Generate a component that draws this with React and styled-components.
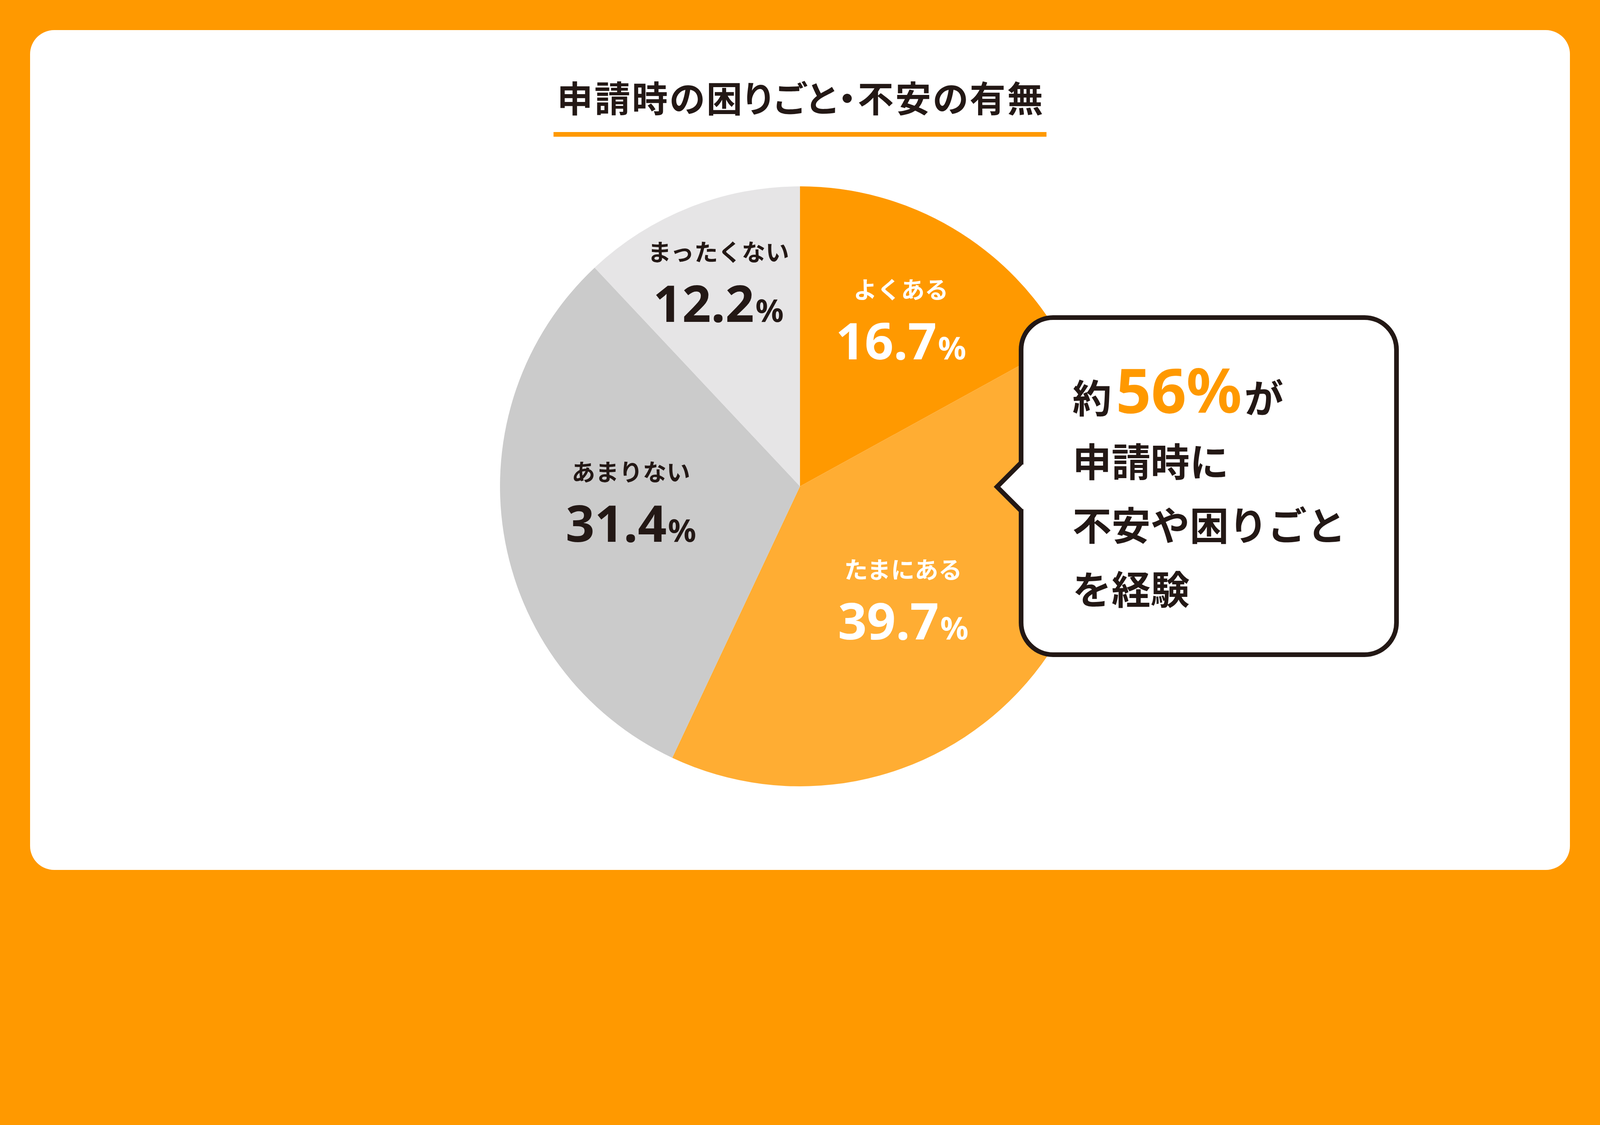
import React from "react";
import styled, { createGlobalStyle } from "styled-components";

const INK = "#231815";
const ORANGE = "#FF9900";
const JP = '"Noto Sans CJK JP", "Noto Sans", sans-serif';
const NUM = '"Noto Sans", "Noto Sans CJK JP", sans-serif';

// one reference pixel (of a 5120px-wide frame) expressed in viewport width
const v = (n) => `${+(n / 51.2).toFixed(5)}vw`;

const Global = createGlobalStyle`
  html, body { margin: 0; padding: 0; background: ${ORANGE}; overflow: hidden; }
  * { box-sizing: border-box; }
`;

const Page = styled.div`
  width: 100vw;
  height: ${v(2880)};
  padding: ${v(96)};
  background: ${ORANGE};
`;

const Card = styled.main`
  width: 100%;
  height: 100%;
  background: #ffffff;
  border-radius: ${v(77)};
  display: flex;
  flex-direction: column;
  align-items: center;
  padding-top: ${v(155)};
`;

const Title = styled.h1`
  margin: 0;
  padding: 0 ${v(6)} ${v(56)} ${v(11)};
  border-bottom: ${v(16)} solid ${ORANGE};
  font-family: ${JP};
  font-weight: 700;
  font-size: ${v(115)};
  letter-spacing: ${v(5)};
  font-feature-settings: "palt" 1;
  line-height: 1;
  color: ${INK};
  white-space: nowrap;
`;

const Chart = styled.section`
  position: relative;
  width: ${v(1920)};
  height: ${v(1920)};
  margin-top: ${v(159)};
  flex-shrink: 0;
`;

const PieSvg = styled.svg`
  display: block;
  width: 100%;
  height: 100%;
`;

const Label = styled.div`
  position: absolute;
  transform: translateX(-50%);
  display: flex;
  flex-direction: column;
  align-items: center;
  color: ${(p) => p.$color};
  white-space: nowrap;
`;

const Caption = styled.div`
  font-family: ${JP};
  font-weight: 700;
  font-size: ${v(76)};
  line-height: 1;
`;

const Value = styled.div`
  margin-top: ${v(45)};
  font-family: ${NUM};
  font-weight: 700;
  font-size: ${v(162)};
  line-height: 1;
`;

const Percent = styled.span`
  font-size: ${v(100)};
  margin-left: ${v(4)};
`;

const Bubble = styled.aside`
  position: absolute;
  left: ${v(1660)};
  top: ${v(413)};
  width: ${v(1216)};
  height: ${v(1094)};
  background: #ffffff;
  border: ${v(15)} solid ${INK};
  border-radius: ${v(110)};
  padding: ${v(141)} 0 0 ${v(157)};
  font-family: ${JP};
  font-weight: 700;
  font-size: ${v(125)};
  line-height: ${v(204)};
  color: ${INK};
`;

const Line = styled.div`
  white-space: nowrap;
`;

const Highlight = styled.span`
  font-family: ${NUM};
  font-size: ${v(197)};
  line-height: 0;
  color: ${ORANGE};
  margin: 0 ${v(8)} 0 ${v(14)};
`;

const Pointer = styled.svg`
  position: absolute;
  left: ${v(-115)};
  top: ${v(400)};
  width: ${v(140)};
  height: ${v(320)};
  overflow: visible;
`;

// value = printed figure, share = size of the drawn wedge
const SLICES = [
  { label: "よくある", value: 16.7, share: 17, color: "#FF9900", text: "#ffffff", x: 1283, y: 331 },
  { label: "たまにある", value: 39.7, share: 40, color: "#FFAD33", text: "#ffffff", x: 1290, y: 1227 },
  { label: "あまりない", value: 31.4, share: 31, color: "#CBCBCB", text: INK, x: 419, y: 915 },
  { label: "まったくない", value: 12.2, share: 12, color: "#E6E5E6", text: INK, x: 699, y: 211 },
];

const R = 960;

function slicePath(start, end) {
  const a0 = (start / 100) * Math.PI * 2 - Math.PI / 2;
  const a1 = (end / 100) * Math.PI * 2 - Math.PI / 2;
  const x0 = R + R * Math.cos(a0);
  const y0 = R + R * Math.sin(a0);
  const x1 = R + R * Math.cos(a1);
  const y1 = R + R * Math.sin(a1);
  const large = end - start > 50 ? 1 : 0;
  return `M${R},${R} L${x0},${y0} A${R},${R} 0 ${large} 1 ${x1},${y1} Z`;
}

function Pie() {
  let acc = 0;
  return (
    <PieSvg viewBox={`0 0 ${R * 2} ${R * 2}`}>
      {SLICES.map((s) => {
        const d = slicePath(acc, acc + s.share);
        acc += s.share;
        return <path key={s.label} d={d} fill={s.color} />;
      })}
    </PieSvg>
  );
}

export default function App() {
  // pointer drawn in bubble padding-box coords, svg placed at (-115, 400)
  const cx = 107.5; // centre line of the bubble's left border in svg coords
  const ty = 549 - 15 - 400; // tip y in svg coords
  const tipX = cx - 77;
  return (
    <Page>
      <Global />
      <Card>
        <Title>申請時の困りごと・不安の有無</Title>
        <Chart>
          <Pie />
          {SLICES.map((s) => (
            <Label key={s.label} $color={s.text} style={{ left: v(s.x), top: v(s.y - 42) }}>
              <Caption>{s.label}</Caption>
              <Value>
                {s.value.toFixed(1)}
                <Percent>%</Percent>
              </Value>
            </Label>
          ))}
          <Bubble>
            <Pointer viewBox="0 0 140 320">
              <polygon
                points={`${tipX},${ty} ${cx},${ty - 77} ${cx + 9},${ty - 69} ${cx + 9},${ty + 69} ${cx},${ty + 77}`}
                fill="#ffffff"
              />
              <polyline
                points={`${cx},${ty - 120} ${cx},${ty - 77} ${tipX},${ty} ${cx},${ty + 77} ${cx},${ty + 120}`}
                fill="none"
                stroke={INK}
                strokeWidth="15"
                strokeLinejoin="miter"
                strokeMiterlimit="10"
              />
            </Pointer>
            <Line>
              約<Highlight>56%</Highlight>が
            </Line>
            <Line>申請時に</Line>
            <Line>不安や困りごと</Line>
            <Line>を経験</Line>
          </Bubble>
        </Chart>
      </Card>
    </Page>
  );
}
